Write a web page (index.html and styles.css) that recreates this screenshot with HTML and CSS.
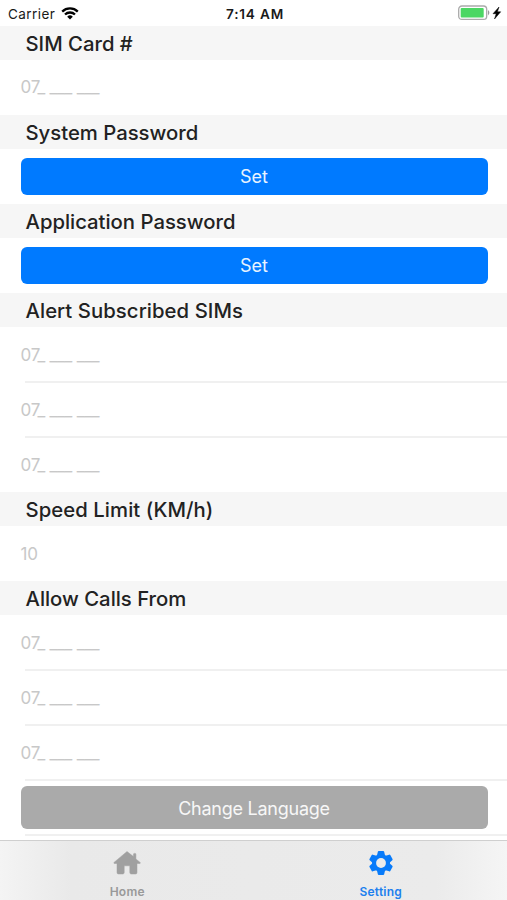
FILE: index.html
```html
<!DOCTYPE html>
<html lang="en">
<head>
<meta charset="utf-8">
<title>Setting</title>
<link rel="stylesheet" href="styles.css">
</head>
<body>
<div class="screen">
  <header class="status">
    <div class="carrier"><span>Carrier</span>
      <svg class="wifi" width="18" height="13" viewBox="0 0 18 13"><path d="M1.2 4.6a11.2 11.2 0 0 1 15.6 0M4 7.5a7.2 7.2 0 0 1 10 0" fill="none" stroke="#000" stroke-width="2.3"/><path d="M6.2 9.7a4 4 0 0 1 5.6 0L9 12.5z"/></svg>
    </div>
    <div class="time">7:14 AM</div>
    <div class="power">
      <svg width="44" height="16" viewBox="0 0 44 16"><rect x=".7" y="1" width="28" height="13.4" rx="3.2" fill="#fff" stroke="#aaa" stroke-width="1.3"/><rect x="2.7" y="3" width="23" height="9.4" rx="1" fill="#4bd763"/><path d="M30 5q2.8 2.7 0 5.400z" fill="#999"/><path d="M41 2l-6 6.700h3.200L36.500 14l6.200-7.200h-3.300z" stroke="#000" stroke-width=".5"/></svg>
    </div>
  </header>
  <main>
    <h2 class="head">SIM Card #</h2>
    <div class="row"><span class="hint">07_ ___ ___</span></div>
    <h2 class="head">System Password</h2>
    <div class="row"><button class="btn">Set</button></div>
    <h2 class="head">Application Password</h2>
    <div class="row"><button class="btn">Set</button></div>
    <h2 class="head wide">Alert Subscribed SIMs</h2>
    <div class="row line"><span class="hint">07_ ___ ___</span></div>
    <div class="row line"><span class="hint">07_ ___ ___</span></div>
    <div class="row"><span class="hint">07_ ___ ___</span></div>
    <h2 class="head wide">Speed Limit (KM/h)</h2>
    <div class="row"><span class="hint">10</span></div>
    <h2 class="head">Allow Calls From</h2>
    <div class="row line"><span class="hint">07_ ___ ___</span></div>
    <div class="row line"><span class="hint">07_ ___ ___</span></div>
    <div class="row line"><span class="hint">07_ ___ ___</span></div>
    <div class="row line"><button class="btn gray">Change Language</button></div>
  </main>
  <nav class="tabs">
    <a class="tab">
      <svg width="28" height="26" viewBox="0 0 28 26"><path d="M14 1.5L1 12.400q-.5.900.4 1.100h2.600v9q0 1.500 1.500 1.500h4.300q1.400 0 1.400-1.400v-6.800h5.600v6.800q0 1.400 1.400 1.400h4.300q1.500 0 1.500-1.500v-9h2.800q.9-.2.3-1.100L22.900 9V4.200q0-.8-.8-.8h-.8q-.8 0-.8.800v2.400z" fill="#a0a0a0" stroke="#a0a0a0" stroke-width=".5"/></svg>
      <span>Home</span>
    </a>
    <a class="tab active">
      <svg width="28" height="26" viewBox="0 0 28 26"><g fill="#087bfa"><g stroke="#087bfa" stroke-width="2" stroke-linejoin="round"><path d="M11.800 2h4.400l1 4.500h-6.400zM11.800 24h4.400l1-4.500h-6.400z"/><path d="M11.800 2h4.400l1 4.500h-6.400zM11.800 24h4.400l1-4.500h-6.400z" transform="rotate(60 14 13)"/><path d="M11.800 2h4.400l1 4.500h-6.400zM11.800 24h4.400l1-4.500h-6.400z" transform="rotate(120 14 13)"/></g><circle cx="14" cy="13" r="9"/></g><circle cx="14" cy="13" r="4.900" fill="#ebebeb"/></svg>
      <span>Setting</span>
    </a>
  </nav>
</div>
</body>
</html>
```
FILE: styles.css
```css
* { box-sizing: border-box; }
body { margin: 0; background: #fff; font-family: Inter, "Liberation Sans", sans-serif; }
.screen { width: 507px; height: 900px; display: flex; flex-direction: column; overflow: hidden; }
.status { height: 25.8px; flex: none; display: grid; grid-template-columns: 1fr auto 1fr; align-items: center; padding: 1.6px 5px 0 8px; font-size: 13.5px; color: #1a1a1a; }
.carrier { display: flex; align-items: center; gap: 6px; letter-spacing: .45px; }
.time { font-weight: 600; font-size: 13.6px; letter-spacing: .8px; }
.power { display: flex; justify-content: flex-end; }
.power svg, .wifi { display: block; }
.wifi { margin-top: -1px; }
.power svg { margin-top: -2px; }
main { height: 814.2px; flex: none; overflow: hidden; }
.head { height: 34.2px; margin: 0; padding-left: 25.5px; background: #f6f6f6; color: #222; font-size: 20.3px; line-height: 36px; font-weight: 550; white-space: nowrap; }
.wide { letter-spacing: .07px; }
.row { height: 54.95px; display: flex; align-items: center; padding: 0 19.5px 0 20.5px; }
.line { position: relative; }
.line::after { content: ""; position: absolute; left: 25px; right: 0; bottom: -1px; height: 2px; background: #f0f0f0; }
.hint { color: #c8c8c8; font-size: 17px; letter-spacing: -.22px; white-space: pre; }
.btn { width: 100%; height: 37px; border: 0; border-radius: 6px; background: #007aff; color: #e8f3ff; font-family: inherit; font-size: 18px; padding: 0; }
.gray { height: 43px; background: #aaa; color: #f7f7f7; letter-spacing: -.25px; padding-top: 1px; }
.tabs { height: 60px; flex: none; display: grid; grid-template-columns: 1fr 1fr; border-top: 1px solid #cfcfcf; background: linear-gradient(90deg, #f4f4f4, #e9e9e9 14%, #ebebeb 86%, #f5f5f5); }
.tab { display: flex; flex-direction: column; align-items: center; padding: 9px 0 0 1px; gap: 7px; color: #999; font-size: 12px; line-height: 17px; font-weight: 600; letter-spacing: .25px; }
.tab svg { display: block; }
.active { color: #1c80ee; }
```
